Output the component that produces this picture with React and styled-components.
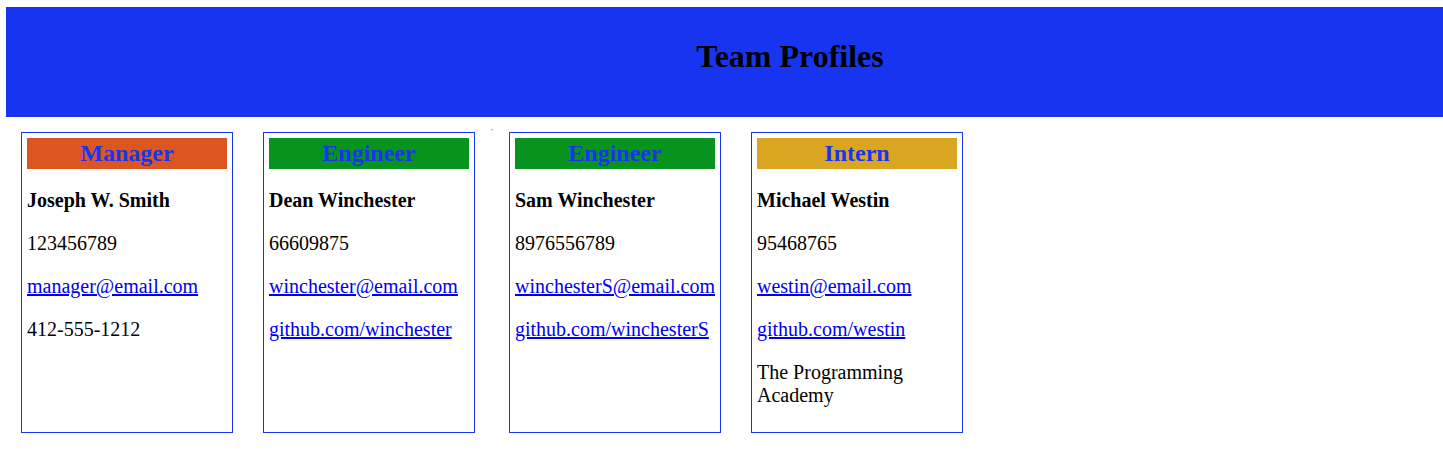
import React from "react";
import styled, { createGlobalStyle } from "styled-components";

const GlobalStyle = createGlobalStyle`
  html, body {
    margin: 0;
    padding: 0;
    background: #fff;
    font-family: "Liberation Serif", "Times New Roman", serif;
    overflow: hidden;
  }
`;

const Page = styled.div`
  padding: 7px 0 0 6px;
`;

const Header = styled.header`
  display: flex;
  align-items: center;
  justify-content: center;
  height: 110px;
  padding-left: 131px;
  background-color: #1735f0;
`;

const Title = styled.h1`
  margin: 0 0 12px;
  font-size: 32px;
  font-weight: bold;
  color: #000;
`;

const CardRow = styled.main`
  display: flex;
  align-items: flex-start;
`;

const Comma = styled.span`
  width: 4px;
  font-size: 7px;
  line-height: 1;
  margin-top: 8px;
  text-align: center;
  color: #000;
`;

const Card = styled.div`
  width: 200px;
  height: 289px;
  margin: 15px;
  padding: 5px;
  border: 1px solid #1735f0;
`;

const Role = styled.h2`
  margin: 0;
  height: 31px;
  line-height: 31px;
  text-align: center;
  font-size: 24px;
  font-weight: bold;
  color: #1735f0;
  background-color: ${({ bg }) => bg};
`;

const Line = styled.p`
  margin: 20px 0;
  font-size: 20px;
  line-height: 23px;
  color: #000;
  font-weight: ${({ bold }) => (bold ? "bold" : "normal")};
`;

const Link = styled.a`
  color: #0000ee;
  text-decoration: underline;
`;

const colors = {
  Manager: "#db5621",
  Engineer: "#08931f",
  Intern: "#daa520",
};

const EmployeeCard = ({ role, name, id, email, extra, github }) => (
  <Card>
    <Role bg={colors[role]}>{role}</Role>
    <Line bold>{name}</Line>
    <Line>{id}</Line>
    <Line>
      <Link href={`mailto:${email}`}>{email}</Link>
    </Line>
    {github && (
      <Line>
        <Link href={`https://${github}`}>{github}</Link>
      </Line>
    )}
    {extra && <Line>{extra}</Line>}
  </Card>
);

const App = () => (
  <>
    <GlobalStyle />
    <Page>
      <Header>
        <Title>Team Profiles</Title>
      </Header>
      <CardRow>
        <EmployeeCard
          role="Manager"
          name="Joseph W. Smith"
          id="123456789"
          email="manager@email.com"
          extra="412-555-1212"
        />
        <EmployeeCard
          role="Engineer"
          name="Dean Winchester"
          id="66609875"
          email="winchester@email.com"
          github="github.com/winchester"
        />
        <Comma>,</Comma>
        <EmployeeCard
          role="Engineer"
          name="Sam Winchester"
          id="8976556789"
          email="winchesterS@email.com"
          github="github.com/winchesterS"
        />
        <EmployeeCard
          role="Intern"
          name="Michael Westin"
          id="95468765"
          email="westin@email.com"
          github="github.com/westin"
          extra="The Programming Academy"
        />
      </CardRow>
    </Page>
  </>
);

export default App;
